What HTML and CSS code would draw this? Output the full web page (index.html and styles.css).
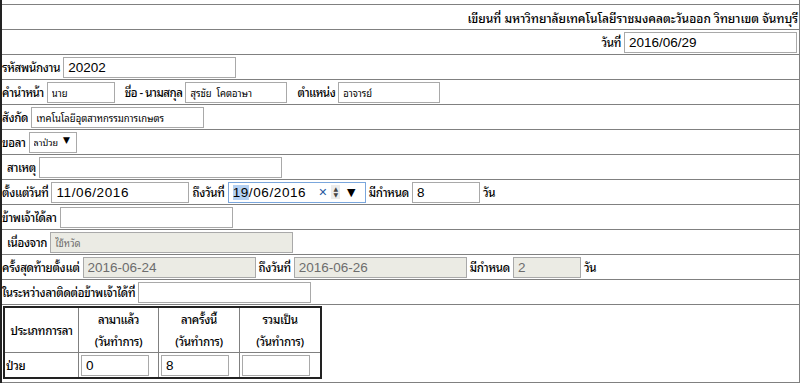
FILE: index.html
```html
<!DOCTYPE html>
<html lang="th">
<head>
<meta charset="utf-8">
<title>ใบลา</title>
<link rel="stylesheet" href="styles.css">
</head>
<body>
<div class="form">
  <div class="row top"></div>
  <div class="row right head">เขียนที่ มหาวิทยาลัยเทคโนโลยีราชมงคลตะวันออก วิทยาเขต จันทบุรี</div>
  <div class="row right"><span>วันที่</span><input class="inp big w173 last-inp" value="2016/06/29"></div>
  <div class="row"><span>รหัสพนักงาน</span><input class="inp big w173" value="20202"></div>
  <div class="row tight">
    <span>คำนำหน้า</span><input class="inp small w67" value="นาย">
    <span class="lbl l2">ชื่อ - นามสกุล</span><input class="inp small w102" value="สุรชัย  โคตอาษา">
    <span class="lbl l2">ตำแหน่ง</span><input class="inp small w102" value="อาจารย์">
  </div>
  <div class="row"><span>สังกัด</span><input class="inp small w172" value="เทคโนโลยีอุตสาหกรรมการเกษตร"></div>
  <div class="row"><span>ขอลา</span><span class="sel"><select><option>ลาป่วย</option></select></span></div>
  <div class="row indent"><span>สาเหตุ</span><input class="inp big w242" value=""></div>
  <div class="row">
    <span>ตั้งแต่วันที่</span><span class="date"><span class="dv">11/06/2016</span></span>
    <span class="lbl">ถึงวันที่</span><span class="date focus"><span class="dv"><span class="hl">19</span>/06/2016</span><span class="x">✕</span><span class="spin"><span>▲</span><span>▼</span></span><span class="drop">▼</span></span>
    <span class="lbl">มีกำหนด</span><input class="inp big w67" value="8"><span class="lbl">วัน</span>
  </div>
  <div class="row"><span>ข้าพเจ้าได้ลา</span><input class="inp big w172" value=""></div>
  <div class="row indent"><span>เนื่องจาก</span><input class="inp small dis w242" value="ไข้หวัด" disabled></div>
  <div class="row">
    <span>ครั้งสุดท้ายตั้งแต่</span><input class="inp big dis w172" value="2016-06-24" disabled>
    <span class="lbl">ถึงวันที่</span><input class="inp big dis w172" value="2016-06-26" disabled>
    <span class="lbl">มีกำหนด</span><input class="inp big dis w67" value="2" disabled>
    <span class="lbl">วัน</span>
  </div>
  <div class="row"><span>ในระหว่างลาติดต่อข้าพเจ้าได้ที่</span><input class="inp big w172" value=""></div>
  <div class="row last">
    <table class="stat">
      <tr>
        <th class="c1">ประเภทการลา</th>
        <th class="c2">ลามาแล้ว<br>(วันทำการ)</th>
        <th class="c3">ลาครั้งนี้<br>(วันทำการ)</th>
        <th class="c4">รวมเป็น<br>(วันทำการ)</th>
      </tr>
      <tr>
        <td>ป่วย</td>
        <td><input class="inp big w67" value="0"></td>
        <td><input class="inp big w67" value="8"></td>
        <td><input class="inp big w67" value=""></td>
      </tr>
    </table>
  </div>
</div>
</body>
</html>
```

FILE: styles.css
```css
html, body {
  margin: 0;
  padding: 0;
  background: #fff;
}
body {
  font-family: "Noto Sans Thai Looped", "Noto Sans Thai", sans-serif;
  font-size: 11.5px;
  font-weight: 500;
  letter-spacing: -0.3px;
  color: #000;
}
.form {
  width: 797px;
  border-left: 2px solid #222;
  border-right: 1px solid #808080;
}
.row {
  height: 24px;
  border-bottom: 1px solid #808080;
  display: flex;
  align-items: center;
  padding-left: 0;
  white-space: nowrap;
  box-sizing: content-box;
}
.row.top { height: 4px; }
.row.right { justify-content: flex-end; padding-right: 1px; }
.row.head { font-size: 12px; letter-spacing: 0; }
.row.tight { letter-spacing: -0.5px; }
.row.indent { padding-left: 5px; }
.row.last { height: 76px; align-items: flex-start; padding-top: 1px; }
.lbl { margin-left: 1px; }
.lbl.l2 { margin-left: 8px; }
.inp {
  box-sizing: border-box;
  height: 21px;
  border: 1px solid #a9a9a9;
  padding: 0 3px;
  margin: 0 2px 0 3px;
  background: #fff;
  color: #000;
  outline: none;
  letter-spacing: 0;
  font-weight: normal;
}
.inp.last-inp { margin-right: 1px; }
.inp.big { font-family: "Liberation Sans", Arial, sans-serif; font-size: 13.5px; padding-left: 4px; }
.inp.small { font-family: "Noto Sans Thai Looped", "Noto Sans Thai", sans-serif; font-size: 9.5px; padding-left: 4px; }
.inp.dis { background: #ebebe4; color: #6d6d6d; }
.w67 { width: 68px; }
.w102 { width: 102px; }
.w172 { width: 173px; }
.w173 { width: 173px; }
.w242 { width: 243px; }
.sel { position: relative; display: inline-flex; margin-left: 3px; }
.sel select {
  appearance: none;
  -webkit-appearance: none;
  box-sizing: border-box;
  width: 48px;
  height: 21px;
  border: 1px solid #a9a9a9;
  border-radius: 0;
  background: #fff;
  font-family: inherit;
  font-size: 9px;
  font-weight: normal;
  padding: 0 0 0 4px;
  color: #000;
  outline: none;
}
.sel::after {
  content: "▼";
  position: absolute;
  right: 7px;
  top: 3px;
  font-family: "DejaVu Sans", sans-serif;
  font-size: 9px;
  pointer-events: none;
}
.date {
  box-sizing: border-box;
  width: 138px;
  height: 21px;
  border: 1px solid #a9a9a9;
  margin: 0 2px 0 3px;
  display: inline-flex;
  align-items: center;
  padding-left: 4px;
  font-family: "Liberation Sans", Arial, sans-serif;
  font-weight: normal;
  font-size: 13.5px;
  letter-spacing: 0.6px;
}
.date.focus { border-color: #7aa6dc; }
.hl { background: #b3d0f3; }
.x {
  color: #2b5aa0;
  font-family: "DejaVu Sans", sans-serif;
  font-size: 11px;
  font-weight: bold;
  margin-left: 12px;
  letter-spacing: 0;
}
.spin {
  display: inline-flex;
  flex-direction: column;
  font-family: "DejaVu Sans", sans-serif;
  font-size: 6px;
  line-height: 6px;
  color: #444;
  margin-left: 4px;
  background: #ececec;
  padding: 1px 2px;
  letter-spacing: 0;
}
.drop { font-family: "DejaVu Sans", sans-serif; font-size: 11px; margin-left: 7px; letter-spacing: 0; }
.stat {
  border-collapse: collapse;
  border: 2px solid #222;
  margin-left: 1px;
}
.stat th, .stat td {
  border: 1px solid #808080;
  padding: 0 1px;
}
.stat th {
  height: 44px;
  font-weight: 500;
  line-height: 22px;
}
.stat td { height: 24px; }
.c1 { width: 71px; }
.c2 { width: 77px; }
.c3 { width: 78px; }
.c4 { width: 78px; }
.stat .inp { margin: 0 2px 0 1px; }
```
